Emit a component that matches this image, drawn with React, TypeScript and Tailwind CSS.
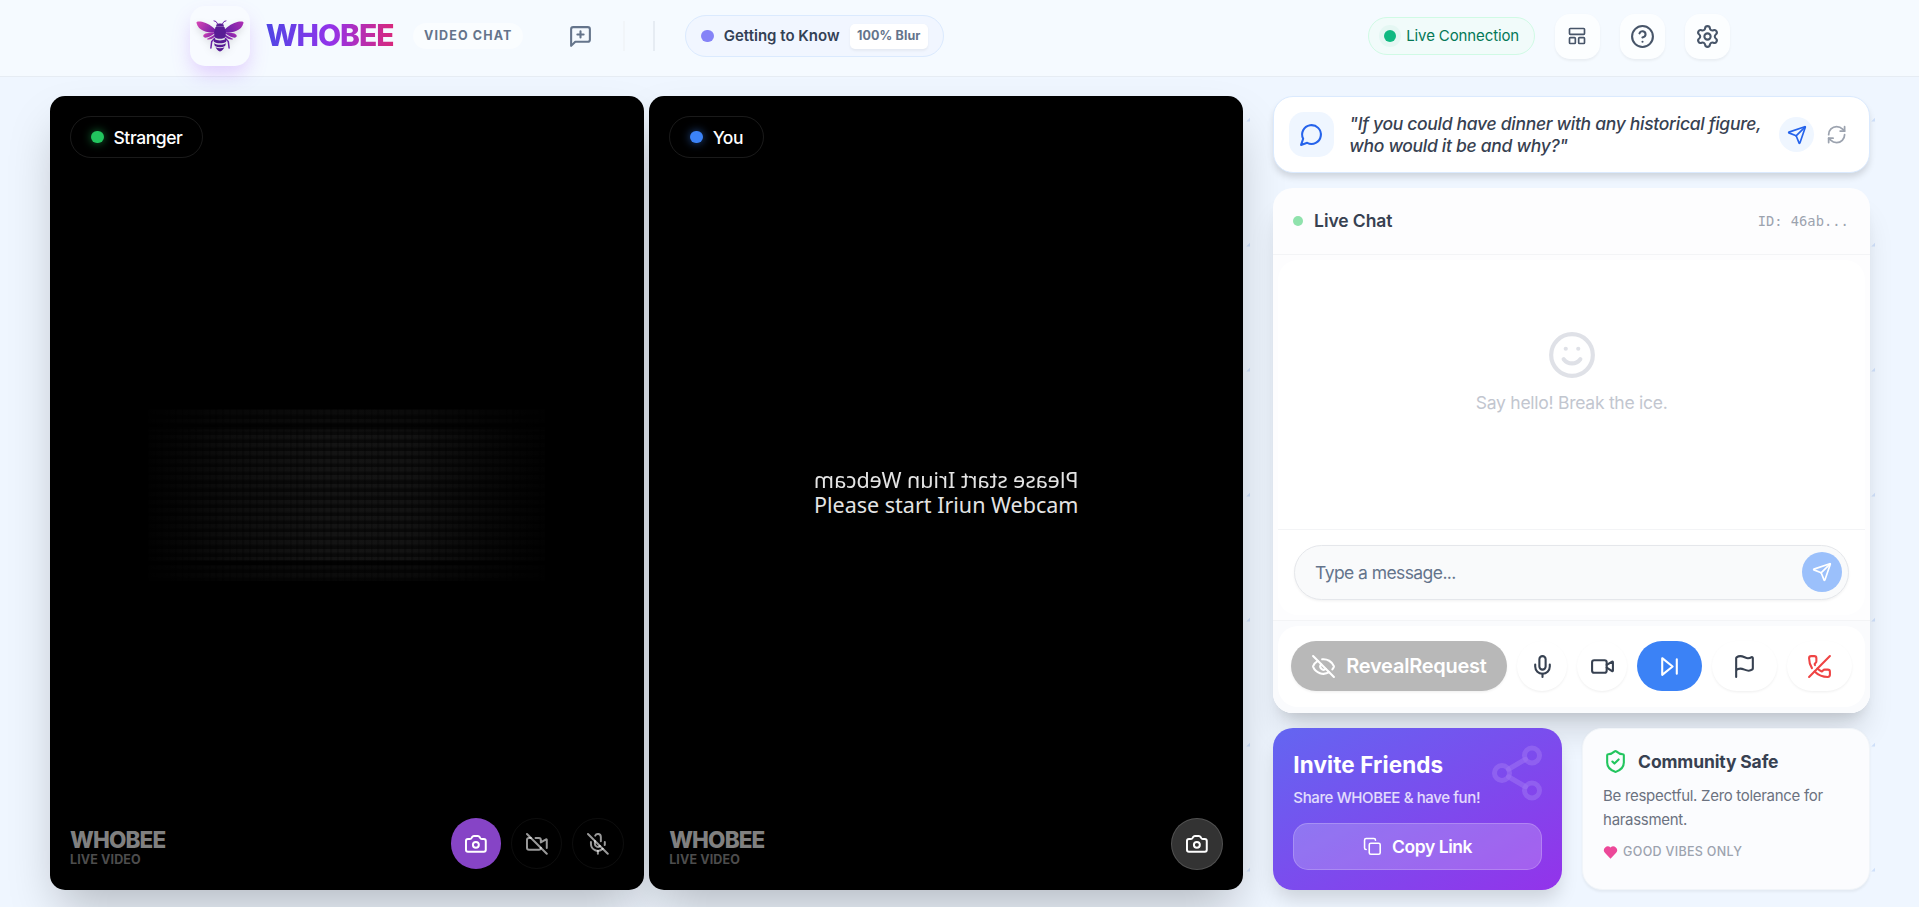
import type { ReactNode } from 'react'
import {
  Camera,
  CircleHelp,
  Copy,
  EyeOff,
  Flag,
  LayoutPanelTop,
  Mic,
  MicOff,
  PhoneOff,
  RefreshCw,
  Send,
  Settings,
  Share2,
  ShieldCheck,
  Smile,
  Video,
  VideoOff,
} from 'lucide-react'

function BeeLogo() {
  return (
    <svg viewBox="0 0 48 32" className="h-[25.6px] w-[38.4px] drop-shadow-md">
      <defs>
        <linearGradient id="wingL" x1="0" y1="0" x2="1" y2="0.4">
          <stop offset="0" stopColor="#d946b5" />
          <stop offset="1" stopColor="#7e22a8" />
        </linearGradient>
        <linearGradient id="wingR" x1="1" y1="0" x2="0" y2="0.4">
          <stop offset="0" stopColor="#b02fb4" />
          <stop offset="1" stopColor="#6b21a8" />
        </linearGradient>
      </defs>
      <g fill="url(#wingL)">
        <path d="M.6 3.2C-.3 1.4 2.6 1 6 1.8c5 1.2 10 4.2 14 8.2l-.3 2.5C13 12.8 2.5 11.5.6 3.2Z" />
        <path d="M19.5 12.6C14 12.3 8 13 7.3 15.6c-.3 1.9 1.8 2.5 4.3 1.7 3-.9 5.8-2.6 7.9-4.7Z" />
        <path d="M19.5 14c-3.5 2.5-6.5 3.6-8.7 5 1.5 1.4 5.5.2 8.7-3Z" />
      </g>
      <g fill="url(#wingR)">
        <path d="M47.4 3.2c.9-1.8-2-2.2-5.4-1.4-5 1.2-10 4.2-14 8.2l.3 2.5c6.7.3 17.2-1 19.1-9.3Z" />
        <path d="M28.5 12.6c5.5-.3 11.5.4 12.2 3 .3 1.9-1.8 2.5-4.3 1.7-3-.9-5.8-2.6-7.9-4.7Z" />
        <path d="M28.5 14c3.5 2.5 6.5 3.6 8.7 5-1.5 1.4-5.5.2-8.7-3Z" />
      </g>
      <g fill="none" stroke="#6b21a8" strokeLinecap="round">
        <path strokeWidth="1" d="M21.5 3.8 20 1.5l-2-.6M26.5 3.8 28 1.5l2-.6" />
        <path strokeWidth="1.5" d="M18.5 18.5l-2.8 3-.8 6.5M29.5 18.5l2.8 3 .8 6.5" />
      </g>
      <g fill="#581c94">
        <path d="M20.5 4.5C22 3 26 3 27.5 4.5l.5 2.2h-8Z" />
        <path d="M19.5 7h9l1.5 5.5-.8 5c-3 1.8-7.4 1.8-10.4 0l-.8-5Z" />
        <path d="M18 18.8c3.5 2.2 8.5 2.2 12 0l.2 2.9c-3.5 2.2-8.9 2.2-12.4 0Z" />
        <path d="M18 23.2c3.5 2 8.5 2 12 0l-.9 2.8c-3 1.6-7.2 1.6-10.2 0Z" />
        <path d="M19.6 27.3c2.8 1.3 6 1.3 8.8 0-1 2.3-2.6 3.8-4.4 4.3-1.8-.5-3.4-2-4.4-4.3Z" />
      </g>
    </svg>
  )
}

function HeaderButton({ children }: { children: ReactNode }) {
  return (
    <button className="flex size-9 items-center justify-center rounded-xl bg-white/70 text-[#475569] shadow-[0_1px_2px_rgba(0,0,0,0.05)]">
      {children}
    </button>
  )
}

function Header() {
  return (
    <header className="relative z-10 h-[61.6px] border-b border-slate-200/80 bg-[#f5faff] pb-[3px]">
      <div className="mx-auto flex h-full max-w-7xl items-center justify-between px-6">
        <div className="flex items-center">
          <div className="flex size-12 items-center justify-center rounded-xl bg-[#f8fbff] shadow-[0_8px_16px_-2px_rgba(168,85,247,0.28)]">
            <BeeLogo />
          </div>
          <span className="ml-[13px] w-[104px] bg-[linear-gradient(90deg,#4f46e5,#9333ea_50%,#db2777)] bg-clip-text text-2xl font-extrabold tracking-[-0.034em] whitespace-nowrap text-transparent">
            WHOBEE
          </span>
          <span className="ml-[14px] flex h-[21px] w-[88px] items-center justify-center rounded-full bg-white/50 text-[10px] font-bold tracking-[0.09em] whitespace-nowrap text-[#64748b]">
            VIDEO CHAT
          </span>
          <svg
            viewBox="0 0 24 24"
            className="ml-[36px] size-5 text-[#64748b]"
            fill="none"
            stroke="currentColor"
            strokeWidth="2"
            strokeLinecap="round"
            strokeLinejoin="round"
          >
            <path d="M21 15a2 2 0 0 1-2 2H7l-4 4V5a2 2 0 0 1 2-2h14a2 2 0 0 1 2 2z" />
            <path d="M9 10h6M12 7v6" />
          </svg>
          <span className="ml-6 h-6 w-px bg-slate-100" />
          <span className="ml-[23px] h-6 w-[1.6px] bg-slate-200/80" />
          <div className="ml-6 flex h-[34px] w-[207px] items-center rounded-full border border-blue-100 bg-[#f1f6ff] pl-[12px]">
            <span className="size-2.5 rounded-full bg-[#8583f7]" />
            <span className="ml-2 w-[93px] text-xs font-semibold whitespace-nowrap text-[#334155]">
              Getting to Know
            </span>
            <span className="ml-2 flex h-[20px] w-[62px] items-center justify-center rounded bg-white text-[10px] font-bold tracking-[0.01em] whitespace-nowrap text-[#64748b] shadow-[0_1px_2px_rgba(0,0,0,0.05)]">
              100% Blur
            </span>
          </div>
        </div>
        <div className="flex items-center gap-4">
          <div className="flex h-[30px] w-[133.4px] items-center rounded-full border border-emerald-100 bg-[#f1fbfa] pl-[12px]">
            <span className="size-2.5 rounded-full bg-[#10b981] ring-4 ring-emerald-500/5" />
            <span className="ml-2 text-xs tracking-[-0.008em] whitespace-nowrap text-[#047857]">
              Live Connection
            </span>
          </div>
          <HeaderButton>
            <LayoutPanelTop className="size-4" />
          </HeaderButton>
          <HeaderButton>
            <CircleHelp className="size-5" />
          </HeaderButton>
          <HeaderButton>
            <Settings className="size-5" />
          </HeaderButton>
        </div>
      </div>
    </header>
  )
}

function NameTag({ name, dot }: { name: string; dot: string }) {
  return (
    <div className="absolute top-4 left-4 flex h-[33.6px] items-center gap-2 rounded-full border border-white/10 px-4 text-sm font-medium tracking-[-0.025em] text-white">
      <span className={`size-2.5 rounded-full ${dot}`} />
      {name}
    </div>
  )
}

function Watermark() {
  return (
    <div className="absolute bottom-[17.5px] left-4 whitespace-nowrap">
      <div className="text-lg leading-[18px] font-extrabold tracking-[-0.038em] text-[#808080]">WHOBEE</div>
      <div className="text-[10px] leading-[13px] font-bold tracking-[0.01em] text-[#4d4d4d]">LIVE VIDEO</div>
    </div>
  )
}

function VideoPanel({ children }: { children: ReactNode }) {
  return (
    <div className="relative overflow-hidden rounded-xl bg-black">
      {children}
      <Watermark />
    </div>
  )
}

function VideoStage() {
  return (
    <div className="grid grid-cols-2 gap-1">
      <div className="grid rounded-xl shadow-[0_20px_40px_-8px_rgba(0,0,0,0.25)]">
        <VideoPanel>
          {/* compressed, nearly black remote frame */}
          <div className="absolute top-[250px] left-[78px] h-[138px] w-[318px] bg-[linear-gradient(0deg,rgba(0,0,0,0.4)_0_12px,rgba(0,0,0,0.8)_13px_16px,transparent_17px_120px,rgba(0,0,0,0.7)_122px_125px,rgba(0,0,0,0.4)_127px),repeating-linear-gradient(0deg,rgba(0,0,0,0.5)_0_2px,transparent_4px_6.5px),repeating-linear-gradient(90deg,rgba(0,0,0,0.25)_0_1px,transparent_2px_5.4px),linear-gradient(90deg,#020202,#0d0d0d_20%,#141414_45%,#131313_65%,#090909_85%,#020202)]" />
          <NameTag name="Stranger" dot="bg-[#22c55e] shadow-[0_0_8px_rgba(34,197,94,0.6)]" />
          <div className="absolute right-4 bottom-[16.5px] flex items-center gap-2">
            <button className="flex h-[41px] w-10 items-center justify-center rounded-full bg-[#8644c6] text-white">
              <Camera className="size-[19px]" />
            </button>
            <button className="flex size-[41.4px] items-center justify-center rounded-full border border-white/5 text-white/60">
              <VideoOff className="size-[19px]" />
            </button>
            <button className="flex size-[41.4px] items-center justify-center rounded-full border border-white/5 text-white/60">
              <MicOff className="size-[19px]" />
            </button>
          </div>
        </VideoPanel>
      </div>
      <div className="grid rounded-xl shadow-[0_20px_40px_-8px_rgba(0,0,0,0.25)]">
        <VideoPanel>
          <NameTag name="You" dot="bg-[#3b82f6] shadow-[0_0_8px_rgba(59,130,246,0.6)]" />
          <div className="flex h-full flex-col items-center justify-center pb-px text-center font-['Noto_Sans',sans-serif] text-[17.2px] leading-5 whitespace-nowrap text-[#e4e4e4]">
            <div className="-scale-x-100">Please start Iriun Webcam</div>
            <div>Please start Iriun Webcam</div>
          </div>
          <button className="absolute right-4 bottom-4 flex size-[41.6px] items-center justify-center rounded-full border border-white/15 bg-[#333] text-white">
            <Camera className="size-[19px]" />
          </button>
        </VideoPanel>
      </div>
    </div>
  )
}

function Icebreaker() {
  return (
    <div className="flex h-[61.6px] shrink-0 items-center rounded-2xl border border-blue-100 bg-white pr-3 pl-3 shadow-[0_4px_6px_-1px_rgba(0,0,0,0.14)]">
      <div className="flex size-9 shrink-0 items-center justify-center rounded-xl bg-[#eff6ff] text-[#2563eb]">
        <svg
          viewBox="0 0 24 24"
          className="size-5"
          fill="none"
          stroke="currentColor"
          strokeWidth="2"
          strokeLinecap="round"
          strokeLinejoin="round"
        >
          <path d="M7.9 20A9 9 0 1 0 4 16.1L2 22Z" />
        </svg>
      </div>
      <p className="ml-3 flex-1 text-sm leading-[17.5px] font-medium tracking-[-0.017em] whitespace-nowrap text-[#374151] italic">
        "If you could have dinner with any historical figure,
        <br />
        who would it be and why?"
      </p>
      <button className="flex size-7 items-center justify-center rounded-full bg-[#eff6ff] text-[#2563eb]">
        <Send className="size-4" />
      </button>
      <button className="ml-1 flex size-7 items-center justify-center text-[#9ca3af]">
        <RefreshCw className="size-[17px]" />
      </button>
    </div>
  )
}

function RoundButton({ wide, children }: { wide?: boolean; children: ReactNode }) {
  return (
    <button
      className={`flex h-10 shrink-0 items-center justify-center rounded-full bg-white text-[#374151] shadow-[0_1px_2px_rgba(0,0,0,0.06)] ${wide ? 'w-[52px]' : 'w-10'}`}
    >
      {children}
    </button>
  )
}

function ChatCard() {
  return (
    <div className="flex flex-1 flex-col overflow-hidden rounded-2xl bg-[#fdfdfe]">
      <div className="flex h-[53.4px] shrink-0 items-center border-b border-gray-100 px-4">
        <span className="size-2 rounded-full bg-[#8fe2ac]" />
        <span className="ml-[8.6px] text-sm font-semibold tracking-[-0.005em] text-[#374151]">Live Chat</span>
        <span className="mt-px mr-px ml-auto font-['DejaVu_Sans_Mono',monospace] text-[11px] text-[#9ca3af]">
          ID: 46ab...
        </span>
      </div>
      <div className="mx-1 mt-1 flex flex-1 flex-col items-center rounded-t-2xl bg-white pt-[56px]">
        <Smile className="size-10 text-[#dfe1e7]" />
        <p className="mt-2 text-sm tracking-[-0.015em] text-[#c2c6cf]">Say hello! Break the ice.</p>
      </div>
      <div className="mx-1 mb-1 h-[69px] shrink-0 rounded-b-2xl border-t border-gray-100 bg-white px-[12.6px] pt-3">
        <div className="flex h-11 items-center justify-between rounded-full border border-gray-200 bg-[#f9fafb] pr-[5px] pl-4 shadow-[0_1px_2px_rgba(0,0,0,0.05)]">
          <span className="text-sm tracking-[-0.033em] text-[#64748b]">Type a message...</span>
          <button className="flex size-8 items-center justify-center rounded-full bg-[#9bc0fb] text-white">
            <Send className="size-4" />
          </button>
        </div>
      </div>
      <div className="h-[74.4px] shrink-0 border-t border-gray-100 bg-[#fafbfd] px-1 pt-1 pb-[5px]">
        <div className="flex h-full items-center gap-2 rounded-2xl bg-white px-[10px]">
          <button className="flex h-10 w-[173px] shrink-0 items-center justify-center gap-2 rounded-full bg-[#b8b8b8] text-base font-semibold tracking-[-0.012em] text-white shadow-[0_1px_2px_rgba(0,0,0,0.06)]">
            <EyeOff className="size-5" />
            RevealRequest
          </button>
          <RoundButton>
            <Mic className="size-5" />
          </RoundButton>
          <RoundButton>
            <Video className="size-5" />
          </RoundButton>
          <button className="flex h-10 w-[52px] shrink-0 items-center justify-center rounded-full bg-[#3b82f6] text-white">
            <svg
              viewBox="0 0 24 24"
              className="size-5"
              fill="none"
              stroke="currentColor"
              strokeWidth="2"
              strokeLinecap="round"
              strokeLinejoin="round"
            >
              <path d="M5 4l10 8-10 8V4zM19 5v14" />
            </svg>
          </button>
          <RoundButton wide>
            <Flag className="size-5" />
          </RoundButton>
          <RoundButton wide>
            <PhoneOff className="size-5 text-[#ef4444]" />
          </RoundButton>
        </div>
      </div>
    </div>
  )
}

function InviteCard() {
  return (
    <div className="relative rounded-2xl bg-[linear-gradient(to_bottom_right,#6366f1,#9333ea)] px-4 pt-[21px] text-white shadow-[0_10px_15px_-3px_rgba(0,0,0,0.15)]">
      <Share2 className="absolute top-3 right-3 size-12 text-[#9b6ff2]/60" />
      <h3 className="text-lg leading-[18px] font-bold tracking-[0.004em]">Invite Friends</h3>
      <p className="mt-[9.2px] text-xs leading-4 font-medium tracking-[-0.025em] text-white/80">
        Share WHOBEE &amp; have fun!
      </p>
      <button className="mt-[11.4px] flex h-[38px] w-full items-center justify-center gap-2 rounded-xl border border-white/20 bg-white/20 text-sm font-semibold tracking-[-0.025em]">
        <Copy className="size-[15px]" />
        Copy Link
      </button>
    </div>
  )
}

function SafetyCard() {
  return (
    <div className="rounded-2xl border border-slate-100 bg-[#fbfcfe] px-[16px] pt-[16px] shadow-[0_1px_2px_rgba(0,0,0,0.05)]">
      <div className="flex items-center gap-2">
        <ShieldCheck className="size-5 text-[#22c55e]" />
        <h3 className="text-sm font-bold tracking-[-0.008em] text-[#374151]">Community Safe</h3>
      </div>
      <p className="mt-2 text-xs leading-[19.5px] tracking-[-0.02em] text-[#6b7280]">
        Be respectful. Zero tolerance for
        <br />
        harassment.
      </p>
      <div className="mt-[8px] flex items-center gap-1 text-[10px] font-medium tracking-[0.025em] text-[#9ca3af]">
        <svg viewBox="0 0 24 24" className="size-3 fill-[#ec4899]">
          <path d="M12 22 3 12.5A6.2 6.2 0 0 1 12 4a6.2 6.2 0 0 1 9 8.5Z" />
        </svg>
        GOOD VIBES ONLY
      </div>
    </div>
  )
}

export default function App() {
  return (
    <div className="relative h-[725.6px] overflow-hidden bg-[#eff6ff] font-['Inter',sans-serif] [zoom:1.25]">
      <svg className="absolute inset-0 h-full w-full">
        <defs>
          <pattern id="specks" width="100" height="100" patternUnits="userSpaceOnUse">
            <path d="M97 97.2 100.2 94v3.2z" fill="#cfe0fa" />
          </pattern>
        </defs>
        <rect width="100%" height="100%" fill="url(#specks)" />
      </svg>
      <Header />
      <main className="relative grid h-[650.4px] grid-cols-[2fr_1fr] gap-6 pt-[15.2px] pr-[39.2px] pl-10">
        <VideoStage />
        <div className="flex flex-col gap-3">
          <Icebreaker />
          <div className="flex min-h-0 flex-1 rounded-2xl shadow-[0_20px_25px_-5px_rgba(0,0,0,0.12),0_8px_10px_-6px_rgba(0,0,0,0.12)]">
            <ChatCard />
          </div>
          <div className="grid h-[129.6px] shrink-0 grid-cols-[231px_1fr] gap-4">
            <InviteCard />
            <SafetyCard />
          </div>
        </div>
      </main>
    </div>
  )
}
